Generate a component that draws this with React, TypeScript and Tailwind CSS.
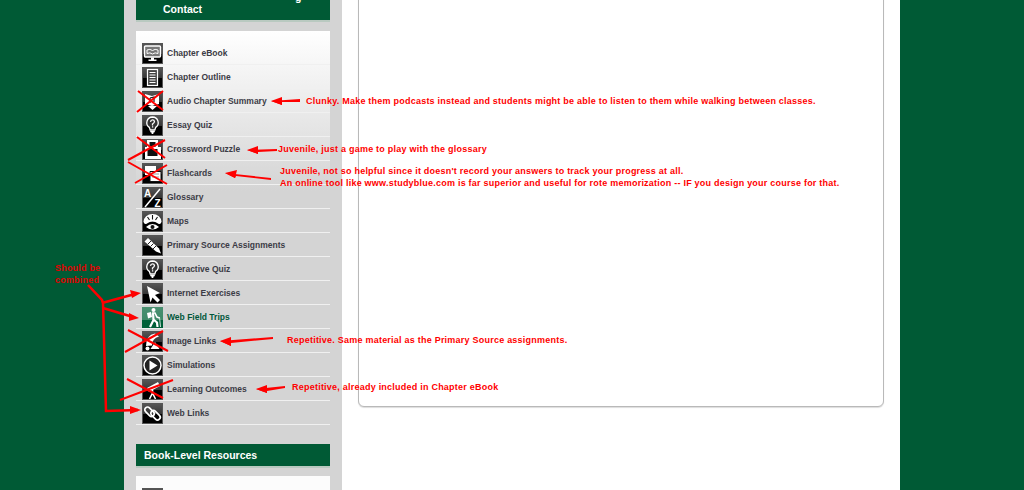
import type { ReactNode } from "react";

const white = "#fff";

const bulb = (
  <>
    <path d="M10.500 2a5.700 5.700 0 0 0-3.200 10.400l.9 2.600h4.600l.9-2.600a5.700 5.700 0 0 0-3.200-10.400z" fill="#333" stroke={white} strokeWidth="1.300" />
    <path d="M8.500 6.800q.3-2 2-2t2 1.800q0 1.300-2 2.400v1.500" fill="none" stroke={white} strokeWidth="1.300" />
    <path d="M10 11.200h1.200v1.200H10z" fill={white} />
    <path d="M8.200 15.800h4.600v1.500h-1l-.6 1.700h-1.400l-.6-1.700h-1z" fill={white} />
  </>
);

const icons: Record<string, ReactNode> = {
  book: (
    <>
      <rect x="2.500" y="3" width="16" height="11" rx="1" fill="#777" stroke={white} strokeWidth="1.400" />
      <path d="M5 7q3-1.500 5.500.5q2.500-2 5.500-.5v3.500q-3-1.500-5.500.5q-2.500-2-5.500-.5z" fill="none" stroke={white} strokeWidth="1" />
      <path d="M9 14.500h3v2h2.500v1.500h-8v-1.500H9z" fill={white} />
    </>
  ),
  outline: (
    <>
      <rect x="5.500" y="2.500" width="10" height="16" fill="#444" stroke={white} strokeWidth="1.200" />
      <path d="M7.500 5.500h6M7.500 8h6M7.500 10.500h6M7.500 13h6M7.500 15.500h6" stroke={white} strokeWidth="1.200" />
    </>
  ),
  audio: (
    <>
      <path d="M3 3l7 2 7-2v10l-7 2-7-2z" fill={white} />
      <path d="M8 7v5M8 7l4-1v5" stroke="#111" strokeWidth="1.200" fill="none" />
      <path d="M6 15h9l-4.500 4z" fill={white} />
    </>
  ),
  bulb,
  crossword: (
    <>
      <path d="M5 1h11v7h3v12H3V8h2z" fill={white} />
      <path d="M7.500 3h6v5h-6zM5.500 10h10v7h-10z" fill="#111" />
    </>
  ),
  cards: (
    <>
      <path d="M3 3h11v9H3z" fill={white} />
      <path d="M8 8.500h11v10H8z" fill={white} stroke="#111" />
      <path d="M10 11h7M10 14h7" stroke="#999" />
    </>
  ),
  glossary: (
    <>
      <text x="2" y="10" fontSize="10" fontWeight="700" fill={white} fontFamily="Liberation Sans, sans-serif">A</text>
      <text x="12.500" y="20" fontSize="10" fontWeight="700" fill={white} fontFamily="Liberation Sans, sans-serif">Z</text>
      <path d="M18 2L3 20" stroke={white} strokeWidth="1.500" />
    </>
  ),
  maps: (
    <>
      <path d="M1.500 11a9 8 0 0 1 18 0q-1 3-3.500 1.500q-5.500-4-11 0q-2.500 1.500-3.500-1.500z" fill={white} />
      <path d="M5.500 6l2 3M10.500 4v4.500M15.500 6l-2 3" stroke="#111" strokeWidth="1.100" />
      <path d="M4 16q6.500-6 13 0q-6.500 5-13 0z" fill={white} />
      <circle cx="10.500" cy="16" r="2" fill="#111" />
    </>
  ),
  pencil: (
    <>
      <path d="M2.500 6.500l3.500-3.500 11 10.500 2 5-5-2z" fill={white} />
      <path d="M6 9l3-3M8.500 11.500l3-3M11 14l3-3" stroke="#222" strokeWidth="1" />
    </>
  ),
  cursor: <path d="M5 3l13 7-5 2 5 5-2.500 2.500-5-5-2 5z" fill={white} />,
  hiker: (
    <>
      <circle cx="11.500" cy="3" r="2" fill={white} />
      <path d="M5 6l4-1 1 5-4 1.500z" fill={white} />
      <path d="M10 6h3l2 4 2.500 1" fill="none" stroke={white} strokeWidth="1.600" />
      <path d="M11 6l.5 7-3.500 7M11.500 12.500l3.500 3 .5 4.500" fill="none" stroke={white} strokeWidth="2.200" />
      <path d="M17.500 10l1 10" stroke={white} strokeWidth=".8" />
    </>
  ),
  image: (
    <>
      <path d="M4 15Q4 4 13 2.500l4 3q-7 2-7 9z" fill={white} />
      <circle cx="5.500" cy="17.500" r="2" fill={white} />
      <path d="M13 11l4.500 7h-9z" fill={white} />
    </>
  ),
  play: (
    <>
      <circle cx="10.500" cy="10.500" r="8.500" fill="#222" stroke={white} strokeWidth="1.500" />
      <path d="M7.500 5.500l8 5-8 5z" fill={white} />
    </>
  ),
  telescope: (
    <>
      <path d="M5 9l11-6 2 4-11 6z" fill={white} />
      <path d="M10.500 11v3l-3 6M10.500 14l3 6" stroke={white} strokeWidth="1.600" fill="none" />
    </>
  ),
  chain: (
    <>
      <rect x="2" y="6" width="11" height="5.500" rx="2.700" transform="rotate(45 7.500 8.750)" fill="none" stroke={white} strokeWidth="1.700" />
      <rect x="8" y="9.500" width="11" height="5.500" rx="2.700" transform="rotate(45 13.500 12.250)" fill="none" stroke={white} strokeWidth="1.700" />
    </>
  ),
};

const rows = [
  { label: "Chapter eBook", icon: "book" },
  { label: "Chapter Outline", icon: "outline" },
  { label: "Audio Chapter Summary", icon: "audio" },
  { label: "Essay Quiz", icon: "bulb" },
  { label: "Crossword Puzzle", icon: "crossword" },
  { label: "Flashcards", icon: "cards" },
  { label: "Glossary", icon: "glossary" },
  { label: "Maps", icon: "maps" },
  { label: "Primary Source Assignments", icon: "pencil" },
  { label: "Interactive Quiz", icon: "bulb" },
  { label: "Internet Exercises", icon: "cursor" },
  { label: "Web Field Trips", icon: "hiker", active: true },
  { label: "Image Links", icon: "image" },
  { label: "Simulations", icon: "play" },
  { label: "Learning Outcomes", icon: "telescope" },
  { label: "Web Links", icon: "chain" },
];

const notes = [
  { text: "Clunky. Make them podcasts instead and students might be able to listen to them while walking between classes.", className: "left-[306px] top-[95px]" },
  { text: "Juvenile, just a game to play with the glossary", className: "left-[278px] top-[143px]" },
  { text: "Juvenile, not so helpful since it doesn't record your answers to track your progress at all.", className: "left-[280px] top-[165px]" },
  { text: "An online tool like www.studyblue.com is far superior and useful for rote memorization -- IF you design your course for that.", className: "left-[280px] top-[177px]" },
  { text: "Repetitive. Same material as the Primary Source assignments.", className: "left-[287px] top-[334px]" },
  { text: "Repetitive, already included in Chapter eBook", className: "left-[292px] top-[381px]" },
];

function Icon({ name, active }: { name: string; active?: boolean }) {
  return (
    <span
      className={
        active
          ? "block w-[21px] h-[21px] shrink-0 bg-[linear-gradient(#4a9071_0,#3f8a68_60%,#006038_60%,#006038_100%)]"
          : "block w-[21px] h-[21px] shrink-0 border border-[#555] bg-[linear-gradient(#555_0,#333_55%,#000_55%,#000_100%)]"
      }
    >
      <svg className={active ? "" : "-m-px"} width="21" height="21" viewBox="0 0 21 21">
        {icons[name]}
      </svg>
    </span>
  );
}

function SideHeader({ children }: { children: ReactNode }) {
  return <div className="relative overflow-hidden bg-[#005a35] border-b-2 border-[#b9c9c0] text-white font-bold">{children}</div>;
}

// arrows and crosses scribbled over the screenshot
function Scribbles() {
  return (
    <svg className="absolute inset-0 pointer-events-none" width="1024" height="490" fill="none" stroke="#f00" strokeWidth="2">
      <path d="M138 91L163 110M163 91L137 112" />
      <path d="M137 137L165 158M165 140L128 160" />
      <path d="M128 162L167 184M167 165L135 183" />
      <path d="M128 330L168 351M163 331L125 352" />
      <path d="M127 379L163 398M173 380L120 400" />
      <path d="M88 285L102 300L103 303L106 411L138 410" strokeWidth="2.500" />
      <path d="M102 303L135 294M103 308L133 317" strokeWidth="2.500" />
      <g fill="#f00" stroke="none">
        <path d="M271 101L300 99L300 102L282 102L282 105z" />
        <path d="M271 101L282 97L282 105z" />
        <path d="M247 150L277 149L277 151L258 152L258 154z" />
        <path d="M247 150L258 146L258 154z" />
        <path d="M225 173L271 178L271 180L236 176L235 178z" />
        <path d="M225 173L237 170L235 178z" />
        <path d="M220 341L273 337L273 339L231 343L231 346z" />
        <path d="M220 341L231 337L231 346z" />
        <path d="M256 389L285 386L285 388L267 391L267 393z" />
        <path d="M256 389L267 385L267 393z" />
        <path d="M141 293L130 290L132 298z" />
        <path d="M139 318L129 313L129 321z" />
        <path d="M141 410L130 406L130 414z" />
      </g>
    </svg>
  );
}

export default function App() {
  return (
    <div className="relative h-[490px] overflow-hidden bg-[#005a35] font-['Liberation_Sans',Arial,sans-serif]">
      <div className="ml-[124px] w-[776px] h-full bg-white flex">
        <aside className="w-[218px] h-full bg-[#d4d4d4] px-3 shrink-0 overflow-hidden">
          <SideHeader>
            <div className="h-[20px] pl-[27px] pt-[2px] text-[10.500px] leading-[14px]">Contact</div>
            <span className="absolute left-[159px] top-[-9px] text-[10.500px] leading-[12px]">g</span>
          </SideHeader>
          <ul className="mt-[9px] pt-[10px] bg-[linear-gradient(#fff_0,#d4d4d4_160px)]">
            {rows.map((row) => (
              <li key={row.label} className="h-[24px] flex items-end pl-[6px] border-b border-[#f0f0f0]">
                <Icon name={row.icon} active={row.active} />
                <span
                  className={
                    row.active
                      ? "ml-1 mb-[5px] text-[8.500px] leading-[12px] font-bold text-[#00573a]"
                      : "ml-1 mb-[5px] text-[8.500px] leading-[12px] font-bold text-[#3c3c46]"
                  }
                >
                  {row.label}
                </span>
              </li>
            ))}
          </ul>
          <div className="mt-[19px]">
            <SideHeader>
              <div className="h-[22px] pl-2 text-[10.500px] leading-[22px]">Book-Level Resources</div>
            </SideHeader>
          </div>
          <div className="mt-[8px] h-[40px] pt-[12px] pl-[6px] bg-[#fcfcfc]">
            <Icon name="book" />
          </div>
        </aside>
        <main className="ml-4 w-[526px] h-[408px] -mt-px bg-white border border-[#b9b9b9] rounded-b-[6px] shadow-[0_1px_1px_#ddd]" />
      </div>
      <Scribbles />
      {notes.map((note) => (
        <span
          key={note.text}
          className={`absolute whitespace-nowrap text-[9px] leading-[12px] font-bold tracking-[0.23px] text-[#f00] ${note.className}`}
        >
          {note.text}
        </span>
      ))}
      <span className="absolute left-[55px] top-[262px] w-[50px] text-[9px] leading-[12px] font-bold tracking-[0.2px] text-[#e00000]">
        Should be combined
      </span>
    </div>
  );
}
